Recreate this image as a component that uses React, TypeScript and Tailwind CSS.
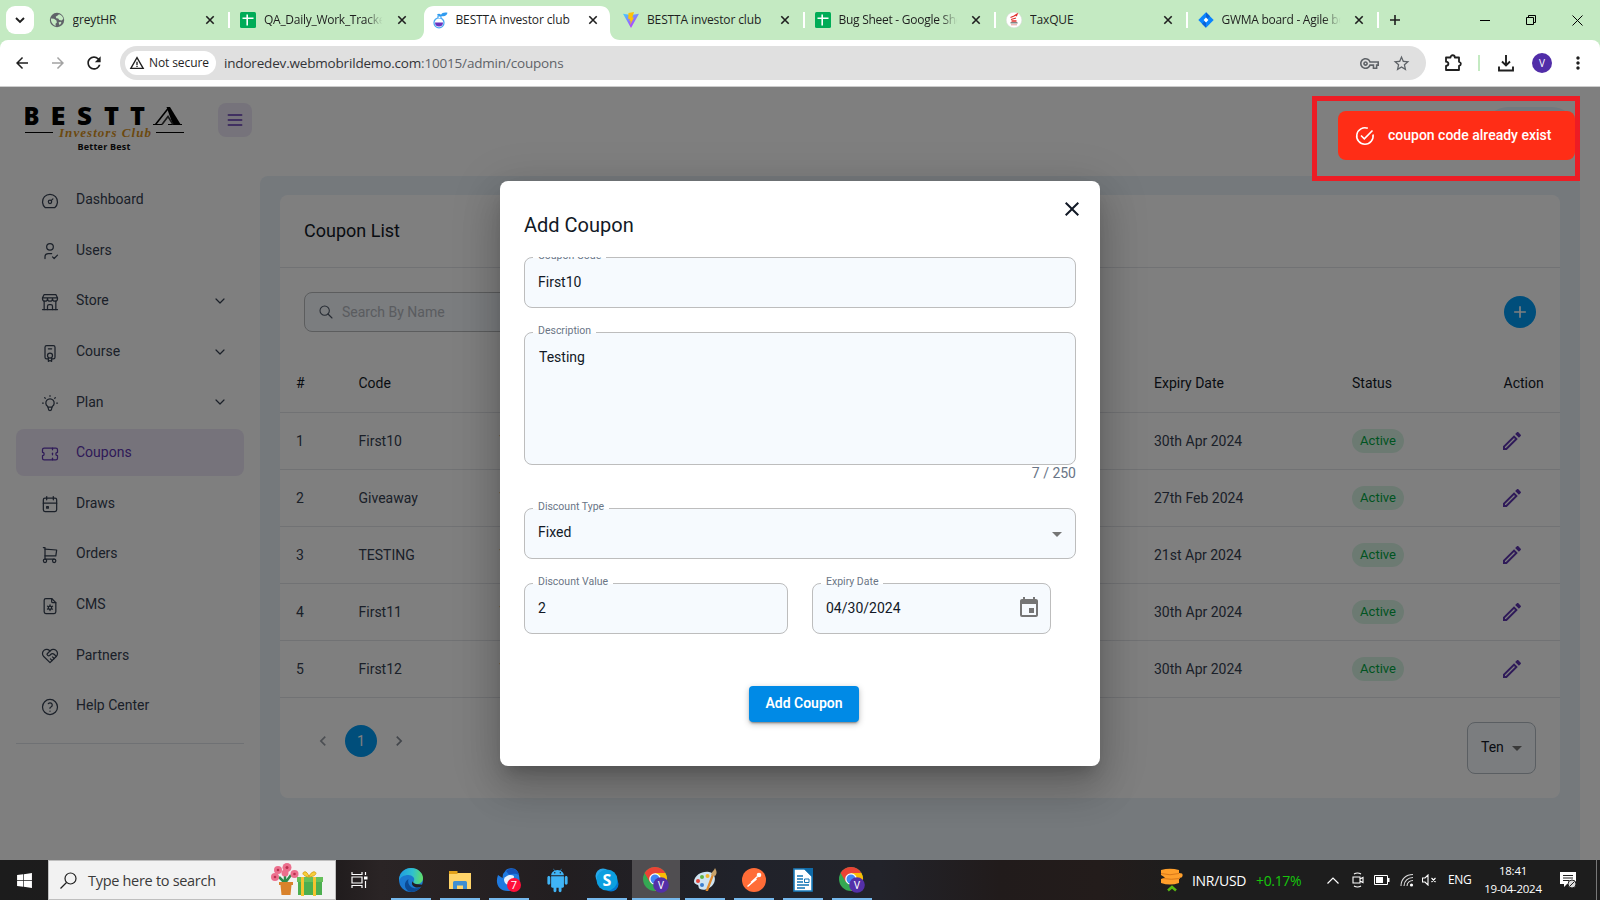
import React from "react";
import {
  TbDashboard,
  TbUserCheck,
  TbBuildingStore,
  TbCertificate2,
  TbBulb,
  TbTicket,
  TbCalendarEvent,
  TbShoppingCart,
  TbFileSettings,
  TbHeartHandshake,
  TbHelp,
  TbChevronDown,
  TbMenu2,
  TbSearch,
} from "react-icons/tb";
import {
  MdAdd,
  MdArrowBack,
  MdArrowDropDown,
  MdArrowForward,
  MdChevronLeft,
  MdChevronRight,
  MdClose,
  MdEvent,
  MdMoreVert,
  MdOutlineVpnKey,
  MdRefresh,
  MdStarBorder,
  MdWarningAmber,
} from "react-icons/md";
import { AiFillAndroid } from "react-icons/ai";
import { FaWindows } from "react-icons/fa";

const segoe = "font-['Open_Sans','Noto_Sans',sans-serif]";

/* ---------- Favicons ---------- */

const GlobeIcon = () => (
  <svg width="16" height="16" viewBox="0 0 16 16">
    <circle cx="8" cy="8" r="7.2" fill="#5f6368" />
    <path d="M2 6.500l3 .3 2.500 1.700.3 2.200-1.300 1 .2 2.300C4 13 1.500 10 2 6.500zM10 2.200L8 4l-1.200.6.4 1.600 2 .3 1 1.500 2.500.5 1.500-1.500C14 4.500 12.500 2.800 10 2.200zM9.500 10.500l2-.8 1 1-1.800 2.500z" fill="#c4eac2" />
  </svg>
);
const SheetsIcon = () => (
  <svg width="16" height="16" viewBox="0 0 16 16">
    <rect width="16" height="16" rx="1.500" fill="#00ac57" />
    <path d="M2.500 6.200h11M7.200 2.500v11" stroke="#fff" strokeWidth="1.600" />
  </svg>
);
const FlaskIcon = () => (
  <svg width="16" height="17" viewBox="0 0 16 17">
    <circle cx="7" cy="10.800" r="5" fill="#fff" stroke="#4aa8f2" strokeWidth="1.300" />
    <path d="M3 10.500h8a4 4 0 0 1-8 0z" fill="#6a35c0" />
    <path d="M6 6V4h3v2" stroke="#4aa8f2" fill="#fff" strokeWidth="1.200" />
    <path d="M5 2.500c1.500-1.200 3-1 4 .3C10 1 12 .2 15.500.8 15 3.500 12.500 4.800 9.500 4 8 4.500 6 4.200 5 2.500z" fill="#2f9bf0" />
  </svg>
);
const ViteIcon = () => (
  <svg width="16" height="16" viewBox="0 0 16 16">
    <defs>
      <linearGradient id="vite" x1="0" y1="0" x2="0.600" y2="1">
        <stop offset="0" stopColor="#41d1ff" />
        <stop offset="1" stopColor="#bd34fe" />
      </linearGradient>
    </defs>
    <path d="M0 1.800l8 14.200 8-14.200-8 1.300z" fill="url(#vite)" />
    <path d="M11 0L5.500 1.100 5.200 7l1.700-.3-.5 2.400 1.300-.3-.6 4.200L11 5.500l-1.700.3L11 0z" fill="#ffc107" />
  </svg>
);
const TaxIcon = () => (
  <svg width="16" height="16" viewBox="0 0 16 16">
    <circle cx="8" cy="8" r="7.800" fill="#fff" stroke="#d9d9d9" strokeWidth=".5" />
    <path d="M4.500 5.500l3.500-1.500 3-1.800-.8 2M5 7.500l5-1.500M5.500 9h5" stroke="#e0312c" strokeWidth="1.300" fill="none" />
    <path d="M4.500 10.800h7" stroke="#666" strokeWidth="1.200" />
    <path d="M5 12.800h6" stroke="#e79a98" strokeWidth="1" />
  </svg>
);
const JiraIcon = () => (
  <svg width="16" height="16" viewBox="0 0 16 16">
    <path d="M8 .3L15.700 8 8 15.700.3 8z" fill="#0a84ff" />
    <path d="M8 .3L12 4.300 8 8z M8 15.700L4 11.700 8 8z" fill="#0b62d6" />
    <path d="M8 5.600L10.400 8 8 10.400 5.600 8z" fill="#fff" />
  </svg>
);

/* ---------- Browser chrome ---------- */

type Tab = { title: string; icon: React.ReactNode; active?: boolean; sep?: boolean; fade?: boolean };
const tabs: Tab[] = [
  { title: "greytHR", icon: <GlobeIcon />, sep: true },
  { title: "QA_Daily_Work_Tracker", icon: <SheetsIcon />, fade: true },
  { title: "BESTTA investor club", icon: <FlaskIcon />, active: true },
  { title: "BESTTA investor club", icon: <ViteIcon />, sep: true },
  { title: "Bug Sheet - Google Sheets", icon: <SheetsIcon />, sep: true, fade: true },
  { title: "TaxQUE", icon: <TaxIcon />, sep: true },
  { title: "GWMA board - Agile board", icon: <JiraIcon />, sep: true, fade: true },
];

const TabItem = ({ tab }: { tab: Tab }) => (
  <div className="relative flex h-[34px] w-[191.500px] shrink-0 items-start pl-2">
    {tab.active && (
      <svg className="absolute top-0 -left-2.5" width="207" height="34" viewBox="0 0 207 34">
        <path d="M0 34c6 0 10-4 10-10V10C10 4 14 0 20 0h166c6 0 10 4 10 10v14c0 6 4 10 10 10z" fill="#fff" />
      </svg>
    )}
    <div className="relative flex h-7 w-full items-center">
      <span className="w-4 shrink-0">{tab.icon}</span>
      <span
        className={
          tab.fade
            ? "ml-2 w-[121px] shrink-0 overflow-hidden text-[12px] tracking-[-0.270px] whitespace-nowrap text-[#1f1f1f] [mask-image:linear-gradient(to_right,black_84%,transparent_98%)]"
            : "ml-2 w-[121px] shrink-0 overflow-hidden text-[12px] tracking-[-0.130px] whitespace-nowrap text-[#1f1f1f]"
        }
      >
        {tab.title}
      </span>
      <span className="ml-[8.500px] text-[#1f1f1f]">
        <svg width="16" height="16" viewBox="0 0 16 16">
          <path d="M4.300 4.300l7.400 7.400M11.700 4.300l-7.400 7.400" stroke="currentColor" strokeWidth="1.600" />
        </svg>
      </span>
      {tab.sep && <span className="ml-[10px] h-4 w-[2px] bg-white" />}
    </div>
  </div>
);

const TabStrip = () => (
  <div className="flex h-10 items-start bg-[#c4eac2] pt-1.5 pl-1.5">
    <div className="flex size-7 items-center justify-center rounded-[9px] bg-white">
      <svg width="10" height="7" viewBox="0 0 10 7">
        <path d="M1 1l4 4 4-4" fill="none" stroke="#1f1f1f" strokeWidth="1.900" />
      </svg>
    </div>
    <div className="ml-[6.500px] flex">
      {tabs.map((t, i) => (
        <TabItem key={i} tab={t} />
      ))}
    </div>
    <div className="flex h-7 flex-1 items-center justify-between pr-[17px] pl-[7.500px] text-[#1f1f1f]">
      <svg width="12" height="12" viewBox="0 0 12 12">
        <path d="M6 1v10M1 6h10" stroke="currentColor" strokeWidth="1.600" />
      </svg>
      <div className="flex items-center gap-9">
        <svg width="10" height="10" viewBox="0 0 10 10">
          <path d="M0 5.500h10" stroke="#000" />
        </svg>
        <svg width="10" height="10" viewBox="0 0 10 10">
          <path d="M.5 2.500h7v7h-7zM2.500 2.500v-2h7v7h-2" fill="none" stroke="#000" />
        </svg>
        <svg width="11" height="11" viewBox="0 0 11 11">
          <path d="M.5 .5l10 10M10.500 .5l-10 10" stroke="#000" />
        </svg>
      </div>
    </div>
  </div>
);

const Toolbar = () => (
  <div className="bg-[#c4eac2]">
    <div className="flex h-[47px] items-center rounded-t-[8px] border-b border-[#cdcdcd] bg-white pl-[13px]">
      <MdArrowBack className="size-[18px] text-[#1f1f1f]" />
      <MdArrowForward className="ml-[18px] size-[18px] text-[#a3a3a3]" />
      <MdRefresh className="ml-[17px] size-5 text-[#1f1f1f]" />
      <div className="ml-4 flex h-[34px] w-[1306px] items-center rounded-full bg-[#e0e0e0] pl-[5px]">
        <div className="flex h-6 w-[91px] items-center gap-[4px] rounded-full bg-white pl-[4px]">
          <MdWarningAmber className="size-4 shrink-0 text-[#1f1f1f]" />
          <span className="text-[12px] tracking-[-0.100px] whitespace-nowrap text-[#1f1f1f]">Not secure</span>
        </div>
        <span className="ml-2 text-[13.500px] tracking-[-0.180px] whitespace-nowrap text-[#5f6368]">
          <span className="text-[#333437]">indoredev.webmobrildemo.com</span>:10015/admin/coupons
        </span>
        <MdOutlineVpnKey className="ml-auto size-[19px] text-[#5f6368]" />
        <MdStarBorder className="mr-[15px] ml-[13px] size-[19px] text-[#5f6368]" />
      </div>
      <svg className="ml-[17px]" width="20" height="20" viewBox="0 0 20 20">
        <path
          d="M3 4.500h4.500c0-3 4.300-3 4.300 0H16v4.300c2.500.4 2.500 3.600 0 4V17H3v-4c3.200-.3 3.200-4 0-4.300z"
          fill="none"
          stroke="#1f1f1f"
          strokeWidth="1.800"
          strokeLinejoin="round"
        />
      </svg>
      <span className="ml-[15px] h-4 w-[2px] bg-[#c4eac2]" />
      <svg className="ml-[18px]" width="16" height="17" viewBox="0 0 16 17">
        <path d="M8 0v10M4 6.500l4 4 4-4M1 11.500V15.500h14v-4" fill="none" stroke="#1f1f1f" strokeWidth="1.900" />
      </svg>
      <span className="ml-[18px] flex size-5 items-center justify-center rounded-full bg-[#512da8] text-[10px] text-white">V</span>
      <MdMoreVert className="ml-4 size-5 text-[#1f1f1f]" />
    </div>
  </div>
);

/* ---------- Admin page ---------- */

const Logo = () => (
  <svg width="164" height="50" viewBox="0 0 164 50">
    <g fontFamily="Open Sans, sans-serif" fontWeight="800" fontSize="25" fill="#000">
      <text x="-1.500" y="22" textLength="16" lengthAdjust="spacingAndGlyphs">B</text>
      <text x="25.500" y="22" textLength="15" lengthAdjust="spacingAndGlyphs">E</text>
      <text x="52" y="22" textLength="15" lengthAdjust="spacingAndGlyphs">S</text>
      <text x="79" y="22" textLength="15" lengthAdjust="spacingAndGlyphs">T</text>
      <text x="105" y="22" textLength="15" lengthAdjust="spacingAndGlyphs">T</text>
    </g>
    <path d="M128 21.500h9M143 21.500h14" stroke="#000" strokeWidth="1.200" />
    <path d="M130.500 21.500L143.500 5" stroke="#000" strokeWidth="1.600" />
    <path d="M141.500 4h3.500L156 22h-8z" fill="#000" />
    <path d="M137 21.500l6-8 5 8" stroke="#333" strokeWidth="1.600" fill="none" />
    <path d="M0 29.500h28M131 29.500h28" stroke="#000" strokeWidth="1" />
    <text
      x="34"
      y="33.500"
      fontFamily="Liberation Serif, serif"
      fontStyle="italic"
      fontWeight="700"
      fontSize="13"
      fill="#d9931e"
      textLength="92"
    >
      Investors Club
    </text>
    <text x="52.500" y="46.500" fontFamily="Open Sans, sans-serif" fontWeight="700" fontSize="9" fill="#111" textLength="53">
      Better Best
    </text>
  </svg>
);

const nav = [
  { label: "Dashboard", Icon: TbDashboard },
  { label: "Users", Icon: TbUserCheck },
  { label: "Store", Icon: TbBuildingStore, sub: true },
  { label: "Course", Icon: TbCertificate2, sub: true },
  { label: "Plan", Icon: TbBulb, sub: true },
  { label: "Coupons", Icon: TbTicket, active: true },
  { label: "Draws", Icon: TbCalendarEvent },
  { label: "Orders", Icon: TbShoppingCart },
  { label: "CMS", Icon: TbFileSettings },
  { label: "Partners", Icon: TbHeartHandshake },
  { label: "Help Center", Icon: TbHelp },
];

const Sidebar = () => (
  <div className="w-[260px] px-4 pt-[0.500px]">
    {nav.map(({ label, Icon, sub, active }) => (
      <div
        key={label}
        className={
          active
            ? "mb-1 flex h-[46.600px] items-center rounded-lg bg-[#ede7f6] pl-6 text-[#5e35b1]"
            : "mb-1 flex h-[46.600px] items-center rounded-lg pl-6 text-[#364152]"
        }
      >
        <Icon className="mt-[2px] size-5" strokeWidth={1.5} />
        <span className={active ? "-mt-px ml-4 text-[14px] leading-5 font-[450]" : "-mt-px ml-4 text-[14px] leading-5"}>{label}</span>
        {sub && <TbChevronDown className="mr-4 ml-auto size-4" strokeWidth={1.800} />}
      </div>
    ))}
    <div className="mt-[14px] mr-0 h-px w-[228px] bg-[#dfe3e8]" />
  </div>
);

const rows = [
  ["1", "First10", "Testing", "30th Apr 2024"],
  ["2", "Giveaway", "Testing", "27th Feb 2024"],
  ["3", "TESTING", "Testing", "21st Apr 2024"],
  ["4", "First11", "Testing", "30th Apr 2024"],
  ["5", "First12", "Testing", "30th Apr 2024"],
];

const CouponCard = () => (
  <div className="h-[603px] w-[1280px] rounded-lg bg-white">
    <div className="flex h-[73px] items-center border-b border-[#e3e5e9] pb-[2px] pl-6">
      <h2 className="text-[18px] font-[450] text-[#121926]">Coupon List</h2>
    </div>
    <div className="flex h-[84px] items-start justify-between px-6 pt-6">
      <div className="flex h-10 w-[350px] items-center rounded-lg border border-[#b8babd] bg-[#f6fafe] pl-[13px]">
        <TbSearch className="size-4 text-[#4b5565]" strokeWidth={1.600} />
        <span className="ml-[8px] text-[14px] font-[450] text-[#b4b8be]">Search By Name</span>
      </div>
      <div className="mt-1 flex size-8 items-center justify-center rounded-full bg-[#009cf6] text-white">
        <MdAdd className="size-5" />
      </div>
    </div>
    <div className="flex h-[61px] items-center border-b border-[#e3e5e9] pt-[2px] text-[14px] font-[450] text-[#121926]">
      <span className="w-[62.500px] pl-4">#</span>
      <span className="w-[141px] pl-4">Code</span>
      <span className="w-[654.500px] pl-4">Description</span>
      <span className="w-[198px] pl-4">Expiry Date</span>
      <span className="w-[151.500px] pl-4">Status</span>
      <span className="pl-4">Action</span>
    </div>
    {rows.map((r) => (
      <div key={r[0]} className="flex h-[57px] items-center border-b border-[#e3e5e9] text-[14px] text-[#364152]">
        <span className="w-[62.500px] pl-4">{r[0]}</span>
        <span className="w-[141px] pl-4">{r[1]}</span>
        <span className="w-[654.500px] pl-4">{r[2]}</span>
        <span className="w-[198px] pl-4">{r[3]}</span>
        <span className="w-[148px] pl-4">
          <span className="inline-flex h-6 w-[52px] items-center justify-center rounded-full bg-[#d9f5e5] text-[13px] text-[#00a843]">
            Active
          </span>
        </span>
        <svg className="ml-4" width="24" height="24" viewBox="0 0 24 24" fill="#5e35b1">
          <path d="M14.060 9.020l.92.92L5.920 19H5v-.920l9.060-9.060M17.660 3c-.25 0-.51.100-.7.290l-1.830 1.830 3.750 3.750 1.830-1.830c.39-.39.39-1.020 0-1.410l-2.340-2.340c-.2-.2-.45-.29-.71-.29zm-3.600 3.190L3 17.250V21h3.750L17.810 9.940l-3.750-3.750z" />
        </svg>
      </div>
    ))}
    <div className="flex h-[100px] items-center justify-between px-6">
      <div className="-mt-[14px] flex items-center text-[14px] text-[#364152]">
        <MdChevronLeft className="ml-[9px] size-5 opacity-50" />
        <span className="mx-[12px] flex size-8 items-center justify-center rounded-full bg-[#009cf6] text-white">1</span>
        <MdChevronRight className="size-5 opacity-60" />
      </div>
      <div className="flex h-[52px] w-[69px] items-center rounded-lg border border-[#b4bcc4] bg-[#f6fafe] pl-[13px] text-[14px] font-[450] text-[#121926]">
        <span className="-mt-[2px]">Ten</span>
        <MdArrowDropDown className="ml-px size-6 text-[#757575]" />
      </div>
    </div>
  </div>
);

const AdminPage = () => (
  <div className="flex h-full w-full flex-col bg-white">
    <div className="flex h-[89px] shrink-0 items-start justify-between pr-6 pl-[25px]">
      <div className="flex items-start">
        <div className="w-[193px] pt-4">
          <Logo />
        </div>
        <div className="mt-4 flex size-[34px] items-center justify-center rounded-lg bg-[#ede7f6]">
          <TbMenu2 className="size-5 text-[#5e35b1]" strokeWidth={1.800} />
        </div>
      </div>
      <div className="mt-5 h-12 w-[92px] rounded-full bg-[#e3f2fd]" />
    </div>
    <div className="flex flex-1">
      <Sidebar />
      <div className="w-[1320px] rounded-t-lg bg-[#eaf3f9] px-5 pt-[19px]">
        <CouponCard />
      </div>
    </div>
  </div>
);

/* ---------- Dialog ---------- */

const Field = ({
  label,
  value,
  size,
  valueClass = "",
  children,
}: {
  label: string;
  value: string;
  size: string;
  valueClass?: string;
  children?: React.ReactNode;
}) => (
  <fieldset className={`relative rounded-lg border border-[#bdbdbd] bg-[#f6fafe] px-[13px] ${size}`}>
    <div className="absolute -top-[10px] left-[8px] flex h-4 items-center px-[5px]">
      <span className="absolute inset-x-0 top-[9px] h-px bg-white" />
      <span className="relative text-[10.500px] whitespace-nowrap text-[#697586]">{label}</span>
    </div>
    <div className="flex h-[49px] items-center text-[14px] font-[450] text-[#121926]">
      <span className={valueClass}>{value}</span>
      {children}
    </div>
  </fieldset>
);

const Dialog = () => (
  <div className="flex h-[585px] w-[600px] flex-col rounded-lg bg-white shadow-[0_11px_15px_-7px_rgba(0,0,0,0.2),0_24px_38px_3px_rgba(0,0,0,0.14),0_9px_46px_8px_rgba(0,0,0,0.12)]">
    <div className="flex h-[76px] shrink-0 items-start justify-between pr-[16px] pl-6">
      <h1 className="mt-8 text-[20px] leading-6 text-[#121926]">Add Coupon</h1>
      <MdClose className="mt-4 size-6 text-[#121926]" />
    </div>
    <div className="flex-1 overflow-hidden px-6">
      <Field label="Coupon Code" value="First10" size="h-[51px]" />
      <div className="mt-6">
        <Field label="Description" value="Testing" size="h-[133px]" valueClass="pl-px" />
      </div>
      <div className="text-right text-[14px] leading-4 text-[#697586]">7 / 250</div>
      <div className="mt-[27px]">
        <Field label="Discount Type" value="Fixed" size="h-[51px]" valueClass="-mt-[2px]">
          <MdArrowDropDown className="-mr-[7px] ml-auto size-6 text-[#757575]" />
        </Field>
      </div>
      <div className="mt-6 flex gap-6">
        <Field label="Discount Value" value="2" size="h-[51px] w-[264px]" />
        <Field label="Expiry Date" value="04/30/2024" size="h-[51px] w-[239px]">
          <MdEvent className="-mt-px -mr-[4px] ml-auto size-6 text-[#757575]" />
        </Field>
      </div>
      <div className="mt-[52px] flex pl-[225px]">
        <button className="h-9 w-[110px] rounded bg-[#008ae6] pb-[2px] text-[14px] font-semibold text-white shadow-[0_3px_1px_-2px_rgba(0,0,0,0.2),0_2px_2px_0_rgba(0,0,0,0.14),0_2px_6px_0_rgba(0,0,0,0.25)]">
          Add Coupon
        </button>
      </div>
    </div>
  </div>
);

const Toast = () => (
  <div className="absolute top-[9px] left-[1312px] h-[85px] w-[268px] border-[5px] border-[#ed1c24] pt-[10px] pl-[21px]">
    <div className="flex h-[49px] w-[237px] items-center rounded-lg bg-[#ff2d16] pl-[17px] text-white">
      <svg width="20" height="20" viewBox="0 0 20 20">
        <path d="M18 8.500A8.200 8.200 0 1 1 12.800 2.300M6 9.500l3.300 3.300L17.500 4.500" fill="none" stroke="#fff" strokeWidth="1.600" />
      </svg>
      <span className="ml-[13px] text-[14px] font-medium">coupon code already exist</span>
    </div>
  </div>
);

/* ---------- Taskbar ---------- */

const EdgeLogo = () => (
  <svg width="24" height="24" viewBox="0 0 24 24">
    <defs>
      <linearGradient id="edgeTop" x1="0" y1="0.300" x2="1" y2="0.400">
        <stop offset="0" stopColor="#1f9be0" />
        <stop offset="0.550" stopColor="#2fc0d0" />
        <stop offset="1" stopColor="#5fdd6a" />
      </linearGradient>
    </defs>
    <circle cx="12" cy="12" r="12" fill="#1b78cf" />
    <path d="M0 11C1 4 6 0 12 0c7 0 12 5 12 10 0 4-3 6-6 6-3.500 0-4.500-1.500-3.500-2.500C17 10 13 7 9.500 7 5 7 1 9 0 13z" fill="url(#edgeTop)" />
    <path d="M9.500 11c-1.500 5 2.500 9.500 7.500 9.300 2 0 4-.8 5.300-1.800C20 22.500 15 24.500 11 23.800 5 22 4 14 9.500 11z" fill="#0c4a94" />
    <path d="M22.500 18.500c-3 1.500-6 1.300-8-.3-2-1.700-2-3.700-.5-5 0 2.500 3 3.200 5 3l4.500.5z" fill="#231f22" />
  </svg>
);
const FolderLogo = () => (
  <svg width="22" height="20" viewBox="0 0 22 20">
    <path d="M0 3h22v16H0z" fill="#ffd469" />
    <path d="M0 1h8.500v3H0z" fill="#e3a21a" />
    <path d="M4 19v-6.500q0-1.500 1.500-1.500h11q1.500 0 1.500 1.500V19h-4v-3.500H8V19z" fill="#3f8ed0" />
  </svg>
);
const ThunderbirdLogo = () => (
  <svg width="26" height="26" viewBox="0 0 26 26">
    <path d="M2 8C-1 16 2 24 12 24c8 0 12-5 11.500-12C23 4 20 1 15 1.200c-3 .1-5 1.300-6 3.300L7 7l-.5 4z" fill="#1f7ae0" />
    <path d="M10 4c4-4 12-3 13 4-3-2-7-1.500-10-.5z" fill="#1453b8" />
    <path d="M8 12c2-4 7-5 10-3l-1 8c-4 2-9 1-9-5z" fill="#e8f1fc" />
    <circle cx="18" cy="18" r="7" fill="#ff0f39" />
    <text x="18" y="22" fontSize="11" fontFamily="Open Sans, sans-serif" textAnchor="middle" fill="#fff">7</text>
  </svg>
);
const SkypeLogo = () => (
  <svg width="24" height="24" viewBox="0 0 24 24">
    <circle cx="8" cy="8" r="7.500" fill="#28a8ea" />
    <circle cx="16" cy="16" r="7.500" fill="#0078d4" />
    <circle cx="12" cy="12" r="10.500" fill="#0c9fe0" />
    <text x="12" y="17.500" fontSize="16" fontWeight="700" fontFamily="Open Sans, sans-serif" textAnchor="middle" fill="#fff">S</text>
  </svg>
);
const ChromeLogo = () => (
  <svg width="26" height="26" viewBox="0 0 26 26">
    <circle cx="12" cy="12" r="12" fill="#34a853" />
    <path d="M12 12V6h10.400A12 12 0 0 1 12 24l5.200-9z" fill="#fbbc04" />
    <path d="M1.600 6A12 12 0 0 1 22.400 6H12L6.800 15z" fill="#ea4335" />
    <circle cx="12" cy="12" r="5.800" fill="#fff" />
    <circle cx="12" cy="12" r="4.500" fill="#4285f4" />
    <circle cx="18" cy="18" r="7.800" fill="#5430a8" />
    <text x="18" y="21.700" fontSize="10" fontFamily="Roboto, sans-serif" textAnchor="middle" fill="#fff">V</text>
  </svg>
);
const PaintLogo = () => (
  <svg width="25" height="24" viewBox="0 0 25 24">
    <path d="M1 13C2 7 9 3 16 4c6 1 7 7 5 11-3 6-10 8-14 6-2-1-1-3-2-4-2-1-4-1-4-4z" fill="#cfe4f2" />
    <circle cx="5" cy="13" r="2" fill="#e2453c" />
    <circle cx="9" cy="9" r="2" fill="#5fb446" />
    <circle cx="14.500" cy="8" r="2" fill="#f3b52b" />
    <circle cx="9" cy="17" r="2" fill="#3c7fd0" />
    <path d="M12.500 23L19 6l2 1-6 16z" fill="#e08a2e" />
    <path d="M18 7c1-4 3-4 4-7 1 2 3 5 0 8z" fill="#c9a36a" />
  </svg>
);
const PostmanLogo = () => (
  <svg width="24" height="24" viewBox="0 0 24 24">
    <circle cx="12" cy="12" r="12" fill="#ff6c37" />
    <circle cx="17" cy="7" r="2.300" fill="#fff" />
    <path d="M15.500 8.500L9 14.500M14.500 11L9 15.500l-3.500 3" stroke="#fff" strokeWidth="1.500" />
  </svg>
);
const WriterLogo = () => (
  <svg width="20" height="24" viewBox="0 0 20 24">
    <path d="M1 1h11l7 7v15H1z" fill="#fff" stroke="#1b7fc0" strokeWidth="1.600" />
    <path d="M10 0h10v10z" fill="#0f6aa8" />
    <path d="M4 8h6M4 11h6M4 14h6M4 17h12M4 20h8" stroke="#1274b5" strokeWidth="1.500" />
    <path d="M11.500 11h4.500v3.500h-4.500z" fill="#fff" stroke="#1274b5" />
  </svg>
);
const GiftArt = () => (
  <svg width="52" height="34" viewBox="0 0 52 34">
    <path d="M14 20L8 14M14 20V8M14 20l6-8" stroke="#2c8a4a" strokeWidth="2.500" />
    <g fill="#ec6f8d">
      <circle cx="16" cy="4.500" r="4.500" />
      <circle cx="7" cy="7" r="4" />
      <circle cx="4" cy="14" r="4" />
      <circle cx="14" cy="10" r="3.500" />
      <circle cx="23.500" cy="11" r="4" />
    </g>
    <g fill="#b9304f">
      <circle cx="16" cy="4.500" r="1.500" />
      <circle cx="7" cy="7" r="1.300" />
      <circle cx="4" cy="14" r="1.300" />
      <circle cx="23.500" cy="11" r="1.300" />
    </g>
    <path d="M8 19h14v3h-1.500l-1 10h-9l-1-10H8z" fill="#d9822b" />
    <path d="M27 17h24v15H27z" fill="#4caf50" />
    <path d="M26 14h26v5H26z" fill="#66c05b" />
    <path d="M30 14h3v19h-3zM42 14h3v19h-3z" fill="#f4c430" />
    <path d="M38 14c-8-1-7-6-3-5 2 1 3 5 3 5s1-4 4-5c4-1 5 4-4 5z" fill="#f7cf3a" stroke="#d9a520" />
  </svg>
);

const apps = [
  { icon: <EdgeLogo />, open: true },
  { icon: <FolderLogo />, open: true },
  { icon: <ThunderbirdLogo />, open: true },
  { icon: <AiFillAndroid className="size-[27px] text-[#40b4f5]" />, open: false },
  { icon: <SkypeLogo />, open: true },
  { icon: <ChromeLogo />, open: true, active: true },
  { icon: <PaintLogo />, open: true },
  { icon: <PostmanLogo />, open: true },
  { icon: <WriterLogo />, open: true },
  { icon: <ChromeLogo />, open: true },
];

const Taskbar = () => (
  <div className="flex h-10 shrink-0 items-center bg-[linear-gradient(to_right,#1c1c1c_0px,#1f1b1c_330px,#2a2425_380px,#221e20_560px,#20222a_740px,#22232a_880px,#211b1b_1000px,#231c1b_1100px,#1d1d1d_1180px)]">
    <div className="flex w-12 justify-center">
      <FaWindows className="size-[17px] text-white" />
    </div>
    <div className="flex h-10 w-[288px] items-center border border-[#bfbfbf] bg-[#f2f2f2] pl-[11px]">
      <svg width="17" height="17" viewBox="0 0 17 17">
        <circle cx="10.500" cy="6.500" r="5.500" fill="none" stroke="#1f1f1f" strokeWidth="1.200" />
        <path d="M6.500 10.500L.5 16.500" stroke="#1f1f1f" strokeWidth="1.300" />
      </svg>
      <span className="mt-px ml-[11px] text-[14.500px] tracking-[-0.300px] whitespace-nowrap text-[#3a3a3a]">Type here to search</span>
      <span className="mr-3 ml-auto">
        <GiftArt />
      </span>
    </div>
    <div className="flex w-[50px] pl-[15px]">
      <svg width="17" height="16" viewBox="0 0 17 16">
        <path d="M1 0v2.500h10V0M1 16v-2.500h10V16M1 5h10v6H1zM14.500 0v3M14.500 9v7" fill="none" stroke="#fff" strokeWidth="1.200" />
        <path d="M13 4.500h3.500v3H13z" fill="#fff" />
      </svg>
    </div>
    <div className="flex">
      {apps.map((a, i) => (
        <div key={i} className="flex h-10 w-[49.100px] justify-center">
          <div
            className={
              a.active ? "flex w-12 shrink-0 flex-col items-center bg-[#504e51]" : "flex w-10 flex-col items-center"
            }
          >
            <div className="flex h-[38px] items-center pt-[2px]">{a.icon}</div>
            {a.open && <div className="h-[2px] w-full bg-[#76b9ed]" />}
          </div>
        </div>
      ))}
    </div>
    <div className="ml-auto flex items-center text-[13px] text-white">
      <svg width="24" height="24" viewBox="0 0 24 24">
        <path d="M1 2q9-2.500 18 0v3l3 .5q1.500 2-.5 4L19 10v5q-9 3-18 0V11l4-1.500L1 7z" fill="#ff9f2b" />
        <path d="M1 5.500q9 2.500 18 0M3 10.500q8 1.500 17 0" stroke="#d9781a" fill="none" />
        <path d="M8 22.500l4-3.500 4 3.500" fill="none" stroke="#58b812" strokeWidth="2.500" />
      </svg>
      <span className="ml-2 w-[64px] text-[14px] tracking-[-0.300px] whitespace-nowrap">INR/USD</span>
      <span className="w-[71px] text-[14px] tracking-[-0.350px] whitespace-nowrap text-[#16c60c]">+0.17%</span>
      <svg width="12" height="7" viewBox="0 0 12 7">
        <path d="M.5 6.500l5.500-5.500 5.500 5.500" fill="none" stroke="#fff" strokeWidth="1.200" />
      </svg>
      <svg className="ml-[13px]" width="12" height="16" viewBox="0 0 12 16">
        <path d="M1 5h7v6H1zM8 7l3-1.500v5L8 9M2 2q3.500-2 7 0M2 14q3.500 2 7 0" fill="none" stroke="#fff" strokeWidth="1.100" />
      </svg>
      <svg className="ml-[10px]" width="16" height="10" viewBox="0 0 16 10">
        <path d="M.5 .5h13v9H.5z" fill="none" stroke="#fff" />
        <path d="M2 2h7v6H2zM14 3h1.500v4H14z" fill="#fff" />
      </svg>
      <svg className="ml-[10px]" width="14" height="14" viewBox="0 0 14 14">
        <path d="M1 13C1 6 6 1.500 13 1.500M4 13c0-5 4-8.500 9-8.500M7 13c0-3.500 3-5.500 6-5.500" fill="none" stroke="#ddd" strokeWidth="1.100" />
        <circle cx="11.500" cy="12" r="1.600" fill="#fff" />
      </svg>
      <svg className="ml-[8px]" width="15" height="12" viewBox="0 0 15 12">
        <path d="M.5 4h2.500l3-3v10l-3-3H.5zM9.500 4l4 4M13.500 4l-4 4" fill="none" stroke="#fff" strokeWidth="1.100" />
      </svg>
      <span className="ml-[11px] w-[36px] text-[12px] tracking-[-0.400px]">ENG</span>
      <div className="flex w-[58px] flex-col items-center text-[11.500px] leading-[18px] tracking-[-0.250px] whitespace-nowrap">
        <span>18:41</span>
        <span>19-04-2024</span>
      </div>
      <svg className="ml-[18px]" width="17" height="17" viewBox="0 0 17 17">
        <path d="M0 0h16v12H7l-3 3v-3H0z" fill="#fff" />
        <path d="M3 3.500h10M3 6h10M3 8.500h6" stroke="#222" strokeWidth="1" />
        <circle cx="12" cy="12" r="4" fill="#ddd" stroke="#222" />
        <path d="M9.500 14.500l5-5" stroke="#222" />
      </svg>
      <span className="mr-[3px] ml-[19px] h-10 w-px bg-[#777]" />
    </div>
  </div>
);

export default function App() {
  return (
    <div className={`flex h-[900px] w-[1600px] flex-col overflow-hidden bg-white ${segoe}`}>
      <TabStrip />
      <Toolbar />
      <div className="relative h-[773px] shrink-0 overflow-hidden font-['Roboto',sans-serif]">
        <AdminPage />
        <div className="absolute inset-0 flex items-center justify-center bg-black/50">
          <Dialog />
        </div>
        <Toast />
      </div>
      <div className={segoe}>
        <Taskbar />
      </div>
    </div>
  );
}
